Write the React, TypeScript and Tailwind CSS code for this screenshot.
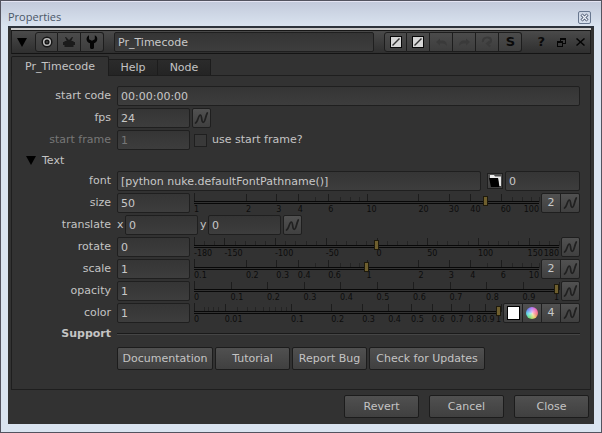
import { useState, type ReactNode } from "react";

type Tick = { at: number; tall?: boolean };
type Mark = { at: number; text: string; end?: boolean };

const field =
  "h-5 min-w-0 rounded-[2px] border border-[#1f1f1f] bg-linear-to-b from-[#353535] to-[#3d3d3d] px-[3px] text-[11px] text-[#c8c8c8] outline-none disabled:text-[#777777]";
const chip =
  "flex items-center justify-center border border-[#1f1f1f] bg-linear-to-b from-[#515151] to-[#404040] text-[#c8c8c8]";
const pushButton =
  "h-[23px] rounded-[2px] border border-[#1c1c1c] bg-linear-to-b from-[#505050] to-[#404040] text-[11px] text-[#c4c4c4]";

function Curve() {
  return (
    <svg className="shrink-0" width="17" height="18" viewBox="0 0 17 18" fill="none" stroke="#202020" strokeWidth="1.700" strokeLinecap="round">
      <path d="M2.500 14C5 13 5.300 6 7.300 6C9.200 6 8 13.300 10.200 13.300C12.300 13.300 12.300 7.500 14.300 4" />
    </svg>
  );
}

function CurveButton({ name, joined }: { name: string; joined?: boolean }) {
  return (
    <button
      aria-label={`${name} animation`}
      className={`${chip} h-5 shrink-0 ${joined ? "-ml-px w-5 rounded-r-[2px]" : "w-[19px] rounded-[2px]"}`}
    >
      <Curve />
    </button>
  );
}

function Row({ label, id, dim, children }: { label: string; id: string; dim?: boolean; children: ReactNode }) {
  return (
    <div className="flex h-5 items-center">
      <label htmlFor={id} className={`mr-1.5 w-[99px] shrink-0 text-right ${dim ? "text-[#777777]" : ""}`}>
        {label}
      </label>
      {children}
    </div>
  );
}

function Slider({ name, value, ticks, marks }: { name: string; value: number; ticks: Tick[]; marks: Mark[] }) {
  return (
    <div className="ml-1 mr-0.5 grid h-5 min-w-0 flex-1">
      <svg className="col-start-1 row-start-1 h-5 w-full overflow-visible" shapeRendering="crispEdges">
        {ticks.map((t, i) => (
          <rect key={i} x={`${t.at * 100}%`} y={t.tall ? 1 : 4} width="1" height={t.tall ? 8 : 5} fill={t.tall ? "#1c1c1c" : "#242424"} />
        ))}
        <rect x="0" y="0" width="1" height="9" fill="#1c1c1c" />
        <rect x="0" y="8" width="100%" height="1" fill="#080808" />
        <rect x="0" y="10" width="100%" height="1" fill="#080808" />
        {marks.map((m) => (
          <text
            key={m.text}
            x={`${m.at * 100}%`}
            y="19"
            fontSize="8"
            fill="#0c0c0c"
            textAnchor={m.end ? "end" : "start"}
          >
            {m.text}
          </text>
        ))}
      </svg>
      <input
        type="range"
        aria-label={name}
        min={0}
        max={1}
        step="any"
        defaultValue={value}
        className="col-start-1 row-start-1 m-0 h-4 w-full appearance-none bg-transparent outline-none [&::-webkit-slider-thumb]:h-[10px] [&::-webkit-slider-thumb]:w-[5px] [&::-webkit-slider-thumb]:appearance-none [&::-webkit-slider-thumb]:border [&::-webkit-slider-thumb]:border-[#1e1a0c] [&::-webkit-slider-thumb]:bg-[#6f5f2e]"
      />
    </div>
  );
}

const units = [1, 2, 3, 4, 5, 6, 7, 8, 9];
const logTicks: Tick[] = [1, 10]
  .flatMap((d) => units.map((n) => n * d))
  .concat(100)
  .map((v) => ({ at: Math.log10(v) / 2, tall: [1, 2, 3, 4, 6].includes(v >= 10 ? v / 10 : v) }));
const logMarks = (scale: number): Mark[] =>
  [1, 2, 3, 4, 6, 10, 20, 30, 40, 60, 100].map((v) => ({
    at: Math.log10(v) / 2,
    text: String(v * scale >= 1 ? Math.round(v * scale) : Number((v * scale).toFixed(1))),
    end: v === 100,
  }));
const degTicks: Tick[] = Array.from({ length: 37 }, (_, i) => ({ at: i / 36, tall: (i * 10 - 180) % 50 === 0 }));
const degMarks: Mark[] = [-180, -150, -100, -50, 0, 50, 100, 149, 180].map((v) => ({
  at: (v + 180) / 360,
  text: String(v === 149 ? 150 : v),
  end: v === 180,
}));
const tenths = [0, 0.1, 0.2, 0.3, 0.4, 0.5, 0.6, 0.7, 0.8, 0.9, 1];
const linearTicks: Tick[] = tenths.map((at) => ({ at, tall: true }));
const linearMarks: Mark[] = tenths.map((v) => ({ at: v, text: String(v), end: v === 1 }));
const rootTicks: Tick[] = [
  ...[0.001, 0.002, 0.004, 0.006].map((v) => ({ at: Math.sqrt(v) })),
  ...units.map((n) => ({ at: Math.sqrt(n / 100), tall: n === 1 })),
  ...tenths.map((v) => ({ at: Math.sqrt(v), tall: true })),
];
// The last two labels nearly touch, so 0.9 is set a little before its tick.
const rootMarks: Mark[] = [0, 0.01, ...tenths.slice(1)].map((v) => ({
  at: v === 0.9 ? 0.938 : Math.sqrt(v),
  text: String(v),
  end: v === 1,
}));

function ToolButton({ name, first, last, children }: { name: string; first?: boolean; last?: boolean; children: ReactNode }) {
  return (
    <button
      aria-label={name}
      className={`flex h-5 w-[23px] items-center justify-center border-y border-r border-[#1d1d1d] bg-linear-to-b from-[#4b4b4b] to-[#3d3d3d] ${first ? "rounded-l-[3px] border-l" : ""} ${last ? "rounded-r-[3px]" : ""}`}
    >
      {children}
    </button>
  );
}

function Swatch() {
  return (
    <svg width="12" height="12" viewBox="0 0 12 12">
      <rect x="0.500" y="0.500" width="11" height="11" fill="#d6d6d6" stroke="#080808" />
      <path d="M2.500 9.500L9.500 2.500" stroke="#333" strokeWidth="1.400" />
    </svg>
  );
}

function Toolbar() {
  return (
    <div className="flex h-6 shrink-0 items-center border border-t-[#161616] border-x-[#1d1d1d] border-b-[#141414] bg-linear-to-b from-[#4a4a4a] to-[#2f2f2f]">
      <button aria-label="Collapse panel" className="ml-[5px] mr-2">
        <svg width="10" height="9" viewBox="0 0 10 9"><path d="M0 0H10L5 9Z" fill="#000" /></svg>
      </button>
      <div className="flex">
        <ToolButton name="Center node" first>
          <svg width="12" height="12" viewBox="0 0 12 12">
            <circle cx="6" cy="6" r="5.500" fill="#161616" />
            <circle cx="6" cy="6" r="3.300" fill="none" stroke="#bdbdbd" strokeWidth="1.500" />
            <circle cx="6" cy="6" r="1" fill="#4a4a4a" />
          </svg>
        </ToolButton>
        <ToolButton name="Input">
          <svg width="12" height="11" viewBox="0 0 12 11">
            <path d="M2 0L3 0L6 3L9 0L10 0L8.300 4H10.500V5H12V8H10.500V10H1.500V8H0V5H1.500V4H3.700Z" fill="#1b1b1b" />
          </svg>
        </ToolButton>
        <ToolButton name="Settings" last>
          <svg width="12" height="14" viewBox="0 0 12 14">
            <path d="M3 .3V4.200L6 5.800L8.800 4.200V.3C10.800 1.200 11.500 3 11.200 4.800C11 6.500 9.500 7.800 8 8.300V12.500C8 14.500 4 14.500 4 12.500V8.300C2.200 7.800 .8 6.500 .6 4.800C.4 3 1.200 1.200 3 .3Z" fill="#050505" />
          </svg>
        </ToolButton>
      </div>
      <input aria-label="Node name" defaultValue="Pr_Timecode" className={`${field} ml-2.5 flex-1`} />
      <div className="ml-2.5 flex">
        <ToolButton name="Node colour" first><Swatch /></ToolButton>
        <ToolButton name="Outline colour"><Swatch /></ToolButton>
        <ToolButton name="Undo">
          <svg width="13" height="9" viewBox="0 0 13 9"><path d="M1 4L5 .5V2.500C10 2 12 4 12 8C10 5.500 8 5.500 5 5.500V7.500Z" fill="#3a3a3a" /></svg>
        </ToolButton>
        <ToolButton name="Redo">
          <svg width="13" height="9" viewBox="0 0 13 9"><path d="M12 4L8 .5V2.500C3 2 1 4 1 8C3 5.500 5 5.500 8 5.500V7.500Z" fill="#3a3a3a" /></svg>
        </ToolButton>
        <ToolButton name="Reset">
          <svg width="12" height="12" viewBox="0 0 12 12" fill="none" stroke="#3a3a3a" strokeWidth="2">
            <path d="M2 6C1 1 9 0 10 4C10.500 6.500 9 7 6.500 7.500M9 5L6 7.500L9 10.500" />
          </svg>
        </ToolButton>
        <ToolButton name="Script defaults" last>
          <span className="text-[13px] font-bold leading-4 text-[#0a0a0a]">S</span>
        </ToolButton>
      </div>
      <button aria-label="Help" className="ml-[15px] text-[13px] font-bold leading-4 text-[#0a0a0a]">?</button>
      <button aria-label="Float" className="ml-3">
        <svg width="9" height="9" viewBox="0 0 9 9" fill="none" stroke="#050505" shapeRendering="crispEdges">
          <path d="M3.500 3V.5H8.500V5.500H6M3 1.500H9M.5 3.500H5.500V8.500H.5ZM0 4.500H6" />
        </svg>
      </button>
      <button aria-label="Close panel" className="ml-2.5 mr-[5px]">
        <svg width="9" height="8" viewBox="0 0 9 8" stroke="#050505" strokeWidth="1.500"><path d="M.5 .5L8.500 7.500M8.500 .5L.5 7.500" /></svg>
      </button>
    </div>
  );
}

const tabs = [
  { name: "Pr_Timecode", width: "w-[98px]" },
  { name: "Help", width: "w-[49px]" },
  { name: "Node", width: "w-[53px]" },
];
const supportLinks = [
  { name: "Documentation", width: "w-24" },
  { name: "Tutorial", width: "w-[75px]" },
  { name: "Report Bug", width: "w-[75px]" },
  { name: "Check for Updates", width: "w-[116px]" },
];

export default function App() {
  const [tab, setTab] = useState("Pr_Timecode");
  return (
    <div className="flex min-h-screen flex-col border border-[#53535f] bg-linear-to-b from-[#c2c9da] to-[#dae4f0] to-[26px] font-['DejaVu_Sans',sans-serif] text-[11px] leading-4 text-[#c4c4c4]">
      <header className="flex h-[25px] items-center justify-between border-t border-[#e4e4f2] pl-[7px] pr-[10px] pt-1.5">
        <h1 className="font-['Open_Sans','Noto_Sans',sans-serif] text-[11px] text-[#4a5768]">Properties</h1>
        <button aria-label="Close window" className="flex h-[13px] w-[13px] items-center justify-center rounded-[2px] border border-[#68778f]">
          <svg width="9" height="9" viewBox="0 0 9 9">
            <path d="M1.500 1.500L7.500 7.500M7.500 1.500L1.500 7.500" stroke="#445069" strokeWidth="3" />
            <path d="M1.800 1.800L7.200 7.200M7.200 1.800L1.800 7.200" stroke="#eef3fa" strokeWidth="1.300" />
          </svg>
        </button>
      </header>

      <main className="mx-[7px] mb-2 flex flex-1 flex-col border-t-2 border-[#2c323b] bg-[#323232] px-[3px]">
        <div className="h-0.5 shrink-0 bg-[#c9c9c9]" />
        <Toolbar />

        <div role="tablist" className="mt-0.5 flex h-[19px] shrink-0 items-end">
          {tabs.map((t) => (
            <button
              key={t.name}
              role="tab"
              aria-selected={t.name === tab}
              onClick={() => setTab(t.name)}
              className={`${t.width} ${
                t.name === tab
                  ? "relative -mb-px h-5 rounded-t-[2px] border border-b-0 border-[#1c1c1c] bg-[#323232]"
                  : "h-4 border-r border-t border-[#1c1c1c] bg-linear-to-b from-[#2b2b2b] to-[#242424]"
              }`}
            >
              {t.name}
            </button>
          ))}
        </div>

        <section className="flex flex-1 flex-col gap-0.5 border border-[#1e1e1e] pr-2.5 pb-[19px] pt-2.5">
          <Row label="start code" id="start-code">
            <input id="start-code" defaultValue="00:00:00:00" className={`${field} flex-1`} />
          </Row>
          <Row label="fps" id="fps">
            <input id="fps" defaultValue="24" className={`${field} mr-0.5 w-[73px]`} />
            <CurveButton name="fps" />
          </Row>
          <Row label="start frame" id="start-frame" dim>
            <input id="start-frame" defaultValue="1" disabled className={`${field} w-[73px]`} />
            <input id="use-start" type="checkbox" className="ml-1 h-[13px] w-[13px] appearance-none border border-[#1f1f1f] bg-[#393939] checked:bg-[#8a8a8a]" />
            <label htmlFor="use-start" className="ml-[5px]">use start frame?</label>
          </Row>

          <button aria-expanded="true" className="flex h-[17px] items-center self-start pl-3.5">
            <svg width="10" height="9" viewBox="0 0 10 9"><path d="M0 0H10L5 9Z" fill="#000" /></svg>
            <span className="ml-1.5">Text</span>
          </button>

          <Row label="font" id="font">
            <input id="font" defaultValue="[python nuke.defaultFontPathname()]" className={`${field} flex-1`} />
            <button aria-label="Choose font file" className={`${chip} ml-1.5 mr-0.5 h-4 w-4 shrink-0`}>
              <svg className="shrink-0" width="14" height="14" viewBox="0 0 14 14">
                <path d="M2 1H6L7 2.500H13V12H11L10 4H2Z" fill="#e8e8e8" />
                <path d="M1 4H10L11.500 13H3Z" fill="#000" />
              </svg>
            </button>
            <input aria-label="Font index" defaultValue="0" className={`${field} w-[75px]`} />
          </Row>
          <Row label="size" id="size">
            <input id="size" defaultValue="50" className={`${field} w-[73px]`} />
            <Slider name="size" value={Math.log10(50) / 2} ticks={logTicks} marks={logMarks(1)} />
            <button className={`${chip} h-5 w-5 shrink-0 rounded-l-[2px]`}>2</button>
            <CurveButton name="size" joined />
          </Row>
          <Row label="translate" id="translate-x">
            <label htmlFor="translate-x" className="w-2">x</label>
            <input id="translate-x" defaultValue="0" className={`${field} w-[73px]`} />
            <label htmlFor="translate-y" className="ml-0.5 w-2">y</label>
            <input id="translate-y" defaultValue="0" className={`${field} mr-0.5 w-[73px]`} />
            <CurveButton name="translate" />
          </Row>
          <Row label="rotate" id="rotate">
            <input id="rotate" defaultValue="0" className={`${field} w-[73px]`} />
            <Slider name="rotate" value={0.5} ticks={degTicks} marks={degMarks} />
            <CurveButton name="rotate" />
          </Row>
          <Row label="scale" id="scale">
            <input id="scale" defaultValue="1" className={`${field} w-[73px]`} />
            <Slider name="scale" value={0.5} ticks={logTicks} marks={logMarks(0.1)} />
            <button className={`${chip} h-5 w-5 shrink-0 rounded-l-[2px]`}>2</button>
            <CurveButton name="scale" joined />
          </Row>
          <Row label="opacity" id="opacity">
            <input id="opacity" defaultValue="1" className={`${field} w-[73px]`} />
            <Slider name="opacity" value={1} ticks={linearTicks} marks={linearMarks} />
            <CurveButton name="opacity" />
          </Row>
          <Row label="color" id="color">
            <input id="color" defaultValue="1" className={`${field} w-[73px]`} />
            <Slider name="color" value={1} ticks={rootTicks} marks={rootMarks} />
            <button aria-label="Pick colour" className={`${chip} h-5 w-5 shrink-0 rounded-l-[2px]`}>
              <span className="h-[14px] w-[13px] border border-black bg-white" />
            </button>
            <button aria-label="Colour wheel" className={`${chip} -ml-px h-5 w-5 shrink-0`}>
              <span className="h-3 w-3 rounded-full bg-[radial-gradient(circle,#ffffffb0,transparent_70%),conic-gradient(#b070f0,#f060b0,#f07070,#e8d060,#70e070,#50d8e0,#6080f0,#b070f0)]" />
            </button>
            <button className={`${chip} -ml-px h-5 w-5 shrink-0`}>4</button>
            <CurveButton name="color" joined />
          </Row>

          <div className="flex h-[18px] items-center">
            <h2 className="mr-1.5 w-[99px] shrink-0 text-right font-bold">Support</h2>
            <hr className="h-0.5 flex-1 border-0 border-b border-t border-b-[#454545] border-t-[#1a1a1a]" />
          </div>
          <div className="ml-[105px] mt-0.5 flex flex-wrap gap-0.5">
            {supportLinks.map((b) => (
              <button key={b.name} className={`${pushButton} ${b.width}`}>{b.name}</button>
            ))}
          </div>
        </section>

        <footer className="flex shrink-0 justify-end gap-2.5 pb-1.5 pr-0.5 pt-[5px]">
          {["Revert", "Cancel", "Close"].map((t) => (
            <button key={t} className={`${pushButton} w-[75px]`}>{t}</button>
          ))}
        </footer>
      </main>
    </div>
  );
}
